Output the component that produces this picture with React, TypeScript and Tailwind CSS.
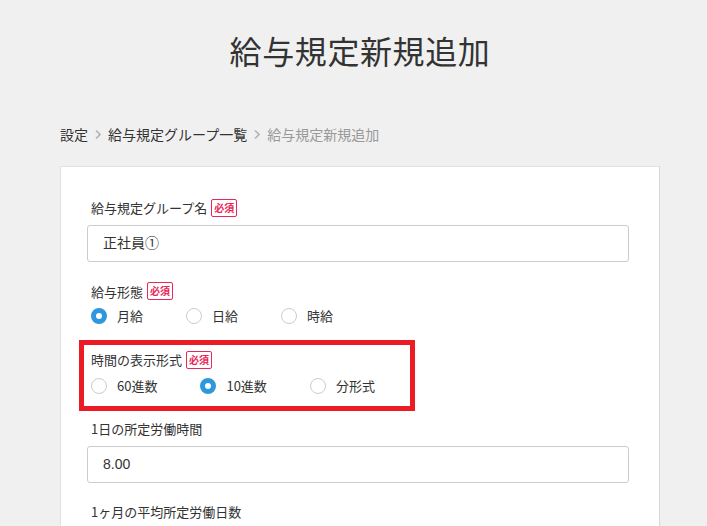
import React from 'react';

const jp = { fontFamily: '"Noto Sans CJK JP", "Noto Sans", sans-serif' };
const inputFont = { fontFamily: '"Liberation Sans", "Noto Sans CJK JP", sans-serif' };

const Required = () => (
  <span className="ml-1 inline-flex h-[18px] items-center rounded-[2px] border border-[#e8275a] bg-white px-[2px] text-[10px] font-bold leading-none text-[#e8275a]">
    必須
  </span>
);

const Radio: React.FC<{ label: string; checked?: boolean }> = ({ label, checked }) => (
  <label className="mr-[43px] flex shrink-0 items-center whitespace-nowrap">
    {checked ? (
      <span className="h-4 w-4 shrink-0 rounded-full border-[5px] border-[#2e97de] bg-white" />
    ) : (
      <span className="h-4 w-4 shrink-0 rounded-full border border-[#cccccc] bg-white" />
    )}
    <span className="ml-[10px] text-[13px] text-[#333]">{label}</span>
  </label>
);

const Chevron = () => (
  <svg width="6" height="11" viewBox="0 0 6 11" className="mx-[7px]">
    <path d="M1 1.5 L5 5.5 L1 9.5" fill="none" stroke="#b3b3b3" strokeWidth="1.6" />
  </svg>
);

export default function App() {
  return (
    <div className="h-[526px] overflow-hidden bg-[#f0f0f0] text-[#333]" style={jp}>
      <h1 className="pt-[26px] pl-[13px] text-center text-[32px] font-normal leading-[48px] tracking-[0.6px] text-[#333]">
        給与規定新規追加
      </h1>

      <div className="mt-[50px] flex items-center pl-[60px] text-[14px] leading-[20px]">
        <span>設定</span>
        <Chevron />
        <span>給与規定グループ一覧</span>
        <Chevron />
        <span className="text-[#999]">給与規定新規追加</span>
      </div>

      <div className="mx-[60px] mt-[22px] w-[600px] border border-[#e2e2e2] border-r-[#d8d8d8] bg-white pt-[31px] pr-[30px] pb-6 pl-[26px]">
        <div className="flex items-center pl-1 text-[13px]">
          給与規定グループ名
          <Required />
        </div>
        <div
          className="mt-[7px] flex h-[37px] items-center rounded-[3px] border border-[#cccccc] px-[15px] text-[14px]"
          style={inputFont}
        >
          正社員①
        </div>

        <div className="mt-[20px] flex items-center pl-1 text-[13px]">
          給与形態
          <Required />
        </div>
        <div className="mt-[5px] flex h-[20px] items-center pl-1">
          <Radio label="月給" checked />
          <Radio label="日給" />
          <Radio label="時給" />
        </div>

        <div className="-ml-[8px] mt-[14px] w-[336px] border-[5px] border-[#ec1c24] pt-[5px] pr-[7px] pb-[10px] pl-[3px]">
          <div className="flex items-center pl-1 text-[13px]">
            時間の表示形式
            <Required />
          </div>
          <div className="mt-[6px] flex h-[20px] items-center pl-1">
            <Radio label="60進数" />
            <Radio label="10進数" checked />
            <Radio label="分形式" />
          </div>
        </div>

        <div className="mt-[9px] flex h-[18px] items-center pl-1 text-[13px]">1日の所定労働時間</div>
        <div
          className="mt-[8px] flex h-[37px] items-center rounded-[3px] border border-[#cccccc] px-[15px] text-[14px]"
          style={inputFont}
        >
          8.00
        </div>

        <div className="mt-[20px] flex h-[18px] items-center pl-1 text-[13px]">1ヶ月の平均所定労働日数</div>
        <div className="mt-[8px] h-[37px] rounded-[3px] border border-[#cccccc]" />
      </div>
    </div>
  );
}
